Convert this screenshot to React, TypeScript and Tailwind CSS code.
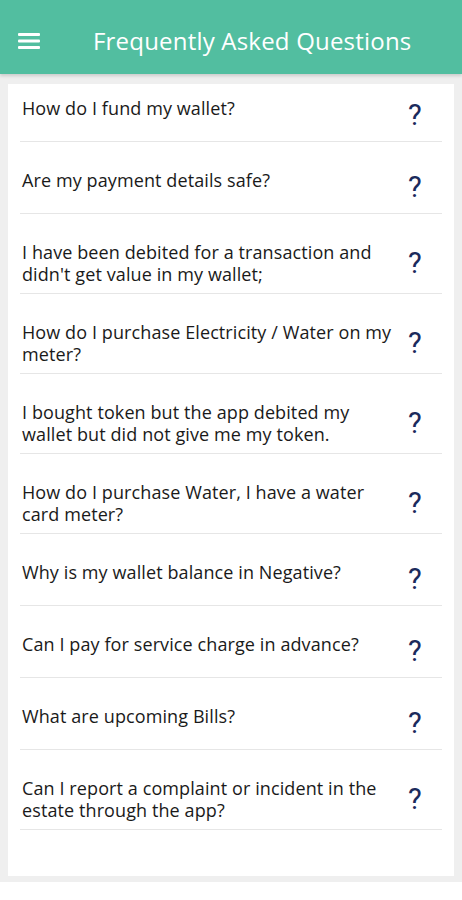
const questions: string[][] = [
  ['How do I fund my wallet?'],
  ['Are my payment details safe?'],
  ['I have been debited for a transaction and', "didn't get value in my wallet;"],
  ['How do I purchase Electricity / Water on my', 'meter?'],
  ['I bought token but the app debited my', 'wallet but did not give me my token.'],
  ['How do I purchase Water, I have a water', 'card meter?'],
  ['Why is my wallet balance in Negative?'],
  ['Can I pay for service charge in advance?'],
  ['What are upcoming Bills?'],
  ['Can I report a complaint or incident in the', 'estate through the app?'],
];

function MenuIcon() {
  return (
    <svg width="22" height="16" viewBox="0 0 22 16" fill="none">
      <rect x="0" y="0" width="22" height="3" rx="1" fill="white" />
      <rect x="0" y="6.5" width="22" height="3" rx="1" fill="white" />
      <rect x="0" y="13" width="22" height="3" rx="1" fill="white" />
    </svg>
  );
}

export default function App() {
  return (
    <div className="w-[462px] min-h-[900px] bg-white font-['Open_Sans',sans-serif]">
      <header className="relative z-10 h-[74px] pt-[8px] bg-[#52bea0] flex items-center shadow-[0_2px_3px_rgba(0,0,0,0.15)]">
        <div className="pl-[18px] pr-[53px] flex items-center">
          <MenuIcon />
        </div>
        <h1 className="text-white text-[24px] leading-none tracking-[0.2px]">Frequently Asked Questions</h1>
      </header>

      <div className="bg-[#efefef] px-[8px] pt-[10px] pb-[6px]">
        <div className="bg-white px-[12px] pt-[13px] pb-[46px]">
          {questions.map((lines, i) => (
            <div
              key={i}
              className={`flex items-center justify-between border-b border-[#e6e6e6] pb-[8px] ${i === 0 ? '' : 'pt-[27px]'}`}
            >
              <p className="self-start pl-[2px] text-[18px] leading-[22px] tracking-[0.1px] text-[#1a1a1a] whitespace-nowrap">
                {lines.map((l, j) => (
                  <span key={j} className="block">
                    {l}
                  </span>
                ))}
              </p>
              <span className="w-[12px] mr-[22px] text-center font-['Roboto',sans-serif] text-[29px] leading-[36px] text-[#1b2a5c]">
                ?
              </span>
            </div>
          ))}
        </div>
      </div>
    </div>
  );
}
